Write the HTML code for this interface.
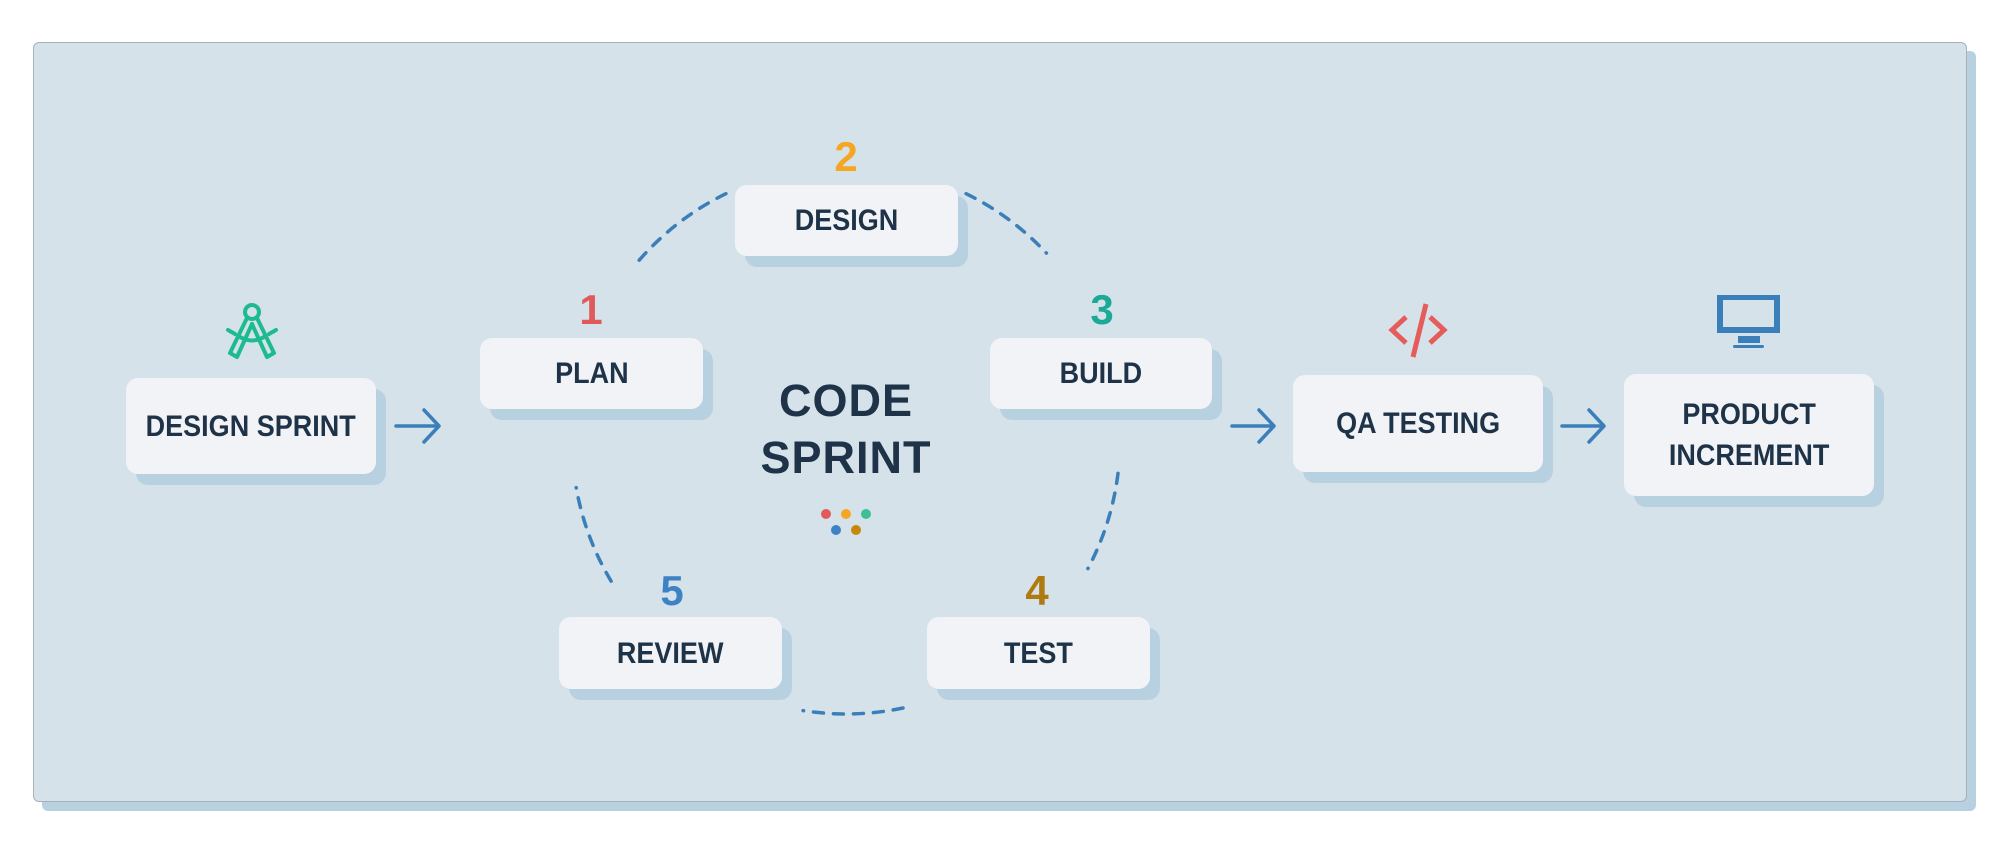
<!DOCTYPE html>
<html><head><meta charset="utf-8"><style>
html,body{margin:0;padding:0;background:#fff;width:2000px;height:846px;overflow:hidden;position:relative;font-family:"Liberation Sans",sans-serif}
.panelsh{position:absolute;left:42px;top:51px;width:1934px;height:760px;background:#b8d1e0;border-radius:6px}
.panel{position:absolute;left:33px;top:42px;width:1932px;height:758px;background:#d5e2ea;border:1px solid #a6b1b8;border-radius:6px}
.box{position:absolute;background:#f1f3f7;border-radius:12px;box-shadow:10px 11px 0 #b8d1e0;display:flex;align-items:center;justify-content:center;text-align:center;color:#1e3348;font-weight:bold;font-size:30px;line-height:41px}
.box span{display:inline-block;transform:scaleX(.9);white-space:nowrap}
.num{position:absolute;font-weight:900;font-size:42px;transform:translateX(-50%);line-height:1}
.cs{position:absolute;left:746px;width:200px;text-align:center;color:#1e3348;font-weight:900;font-size:45px;line-height:1;letter-spacing:1px}
</style></head><body>
<div class="panelsh"></div>
<div class="panel"></div>
<div class="box" style="left:126px;top:378px;width:250px;height:96px"><span>DESIGN SPRINT</span></div>
<div class="box" style="left:480px;top:338px;width:223px;height:71px"><span>PLAN</span></div>
<div class="box" style="left:735px;top:185px;width:223px;height:71px"><span>DESIGN</span></div>
<div class="box" style="left:990px;top:338px;width:222px;height:71px"><span>BUILD</span></div>
<div class="box" style="left:559px;top:617px;width:223px;height:72px"><span>REVIEW</span></div>
<div class="box" style="left:927px;top:617px;width:223px;height:72px"><span>TEST</span></div>
<div class="box" style="left:1293px;top:375px;width:250px;height:97px"><span>QA TESTING</span></div>
<div class="box" style="left:1624px;top:374px;width:250px;height:122px"><span>PRODUCT<br>INCREMENT</span></div>
<div class="num" style="left:591px;top:289px;color:#e05a5a">1</div>
<div class="num" style="left:846px;top:136px;color:#f5a623">2</div>
<div class="num" style="left:1102px;top:289px;color:#1aaa96">3</div>
<div class="num" style="left:1037px;top:570px;color:#b07a12">4</div>
<div class="num" style="left:672px;top:570px;color:#3d82c4">5</div>
<div class="cs" style="top:378px">CODE</div>
<div class="cs" style="top:435px">SPRINT</div>
<svg width="2000" height="846" style="position:absolute;left:0;top:0">
<g fill="none" stroke="#3b7fba" stroke-width="3.5" stroke-dasharray="10 10" stroke-linecap="round">
<path d="M639.2 260.2 A274 274 0 0 1 725.9 193.7"/>
<path d="M966.1 193.7 A274 274 0 0 1 1046.4 253.1"/>
<path d="M1118 473.4 A274 274 0 0 1 1087.9 568.6"/>
<path d="M903 708 A274 274 0 0 1 803.1 710.6"/>
<path d="M611.1 581.1 A274 274 0 0 1 576.2 487.6"/>
</g>
<g fill="none" stroke="#3b7fba" stroke-width="3.5" stroke-linecap="round" stroke-linejoin="round">
<path d="M396 426 H438 M424 410 L439 426 L424 442"/>
<path d="M1232 426 H1273 M1259 410 L1274 426 L1259 442"/>
<path d="M1562 426 H1603 M1589 410 L1604 426 L1589 442"/>
</g>
<circle cx="826" cy="514" r="5" fill="#e05a5a"/>
<circle cx="846" cy="514" r="5" fill="#f5a623"/>
<circle cx="866" cy="514" r="5" fill="#3fbf96"/>
<circle cx="836" cy="530" r="5" fill="#3d82c4"/>
<circle cx="856" cy="530" r="5" fill="#c8860a"/>
<g fill="none" stroke="#1dbb8f" stroke-width="4" stroke-linejoin="round" stroke-linecap="round">
<circle cx="252" cy="312" r="7"/>
<path d="M247 318 L230 353 L237 357 L252 324"/>
<path d="M257 318 L274 353 L267 357 L252 324"/>
<path d="M240 337 Q252 344 264 337"/>
<path d="M228 330 L235 334 M276 330 L269 334"/>
</g>
<g fill="none" stroke="#e55c5a" stroke-width="5" stroke-linecap="butt">
<path d="M1406 317 L1392 330 L1406 343"/>
<path d="M1430 317 L1444 330 L1430 343"/>
<path d="M1426 304 L1413 357"/>
</g>
<g fill="#3b7fba">
<path fill-rule="evenodd" d="M1717 295 H1780 V333 H1717 Z M1723 300 V327 H1774 V300 Z"/>
<rect x="1738" y="336" width="22" height="7"/>
<rect x="1733" y="345" width="31" height="3" rx="1.5"/>
</g>
</svg>
</body></html>
